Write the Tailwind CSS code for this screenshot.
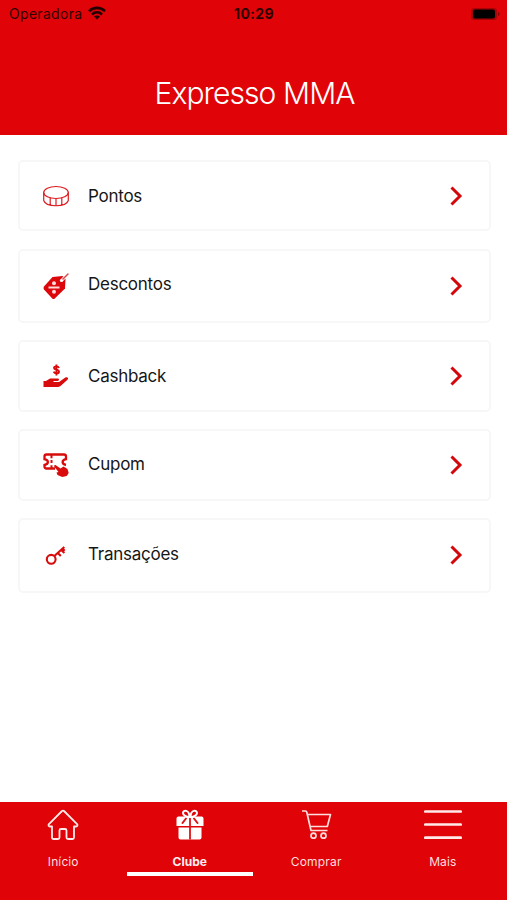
<!DOCTYPE html>
<html lang="pt-BR">
<head>
<meta charset="utf-8">
<title>Expresso MMA</title>
<script src="https://cdn.jsdelivr.net/npm/@tailwindcss/browser@4"></script>
</head>
<body class="bg-white">
<div class="flex h-[900px] w-[507px] flex-col overflow-hidden bg-white font-['Inter','Liberation_Sans',sans-serif] text-[#161616]">
  <header class="h-[135px] shrink-0 bg-[#e00408]">
    <div class="grid h-[27px] grid-cols-3 items-center pl-[9px] pr-[6px] text-[#300000]">
      <div class="flex items-center gap-[6px]">
        <span class="text-[14px] leading-none tracking-[0.3px]">Operadora</span>
        <svg class="-mt-px h-[14px] w-[18px]" viewBox="0 0 18 14" fill="none" stroke="#240000" stroke-width="2.700"><path d="M1 5.2C5.5.8 12.500.8 17 5.200M4 8.500c2.900-2.800 7.100-2.800 10 0"/><path d="M9 13.500 6 10.600c1.700-1.600 4.300-1.600 6 0z" fill="#240000" stroke="none"/></svg>
      </div>
      <span class="pr-[2px] text-center text-[14px] font-bold leading-none tracking-[0.4px]">10:29</span>
      <svg class="justify-self-end" width="31" height="14" viewBox="0 0 31 14"><rect x="1" y="1" width="26" height="12" rx="3.500" fill="#a80306"/><rect x="3" y="2.500" width="22" height="9" rx="2" fill="#000"/><path d="M28 5c2 .5 2 3.500 0 4z" fill="#8c0204"/></svg>
    </div>
    <h1 class="pl-[2px] pt-[47px] text-center text-[30px] font-light leading-[38px] tracking-[-0.9px] text-white">Expresso MMA</h1>
  </header>

  <main class="flex flex-1 flex-col pl-[18px] pr-4 pt-[25px] text-[17px] tracking-[-0.25px]">
    <a class="mb-[18px] flex h-[71px] items-center rounded-[5px] border-2 border-[#f7f7f7] pl-[22px] pr-[25px]">
      <svg class="mr-[18px] size-7" viewBox="0 0 28 28" fill="none" stroke="#dc1c20" stroke-width="1.200"><ellipse cx="14" cy="10.500" rx="12.300" ry="6"/><path d="M1.700 10.500v8C4 25.500 24 25.500 26.300 18.500V10.500M8.200 15.800v7M14 16.800v7M19.800 15.800v7"/></svg>
      <span class="mt-[2px] flex-1">Pontos</span>
      <svg width="16" height="22" viewBox="0 0 16 22" fill="none" stroke="#d3080c" stroke-width="3"><path d="m3.500 2.500 8.500 8.500-8.500 8.500"/></svg>
    </a>
    <a class="mb-[17px] flex h-[74px] items-center rounded-[5px] border-2 border-[#f7f7f7] pl-[22px] pr-[25px]">
      <svg class="mr-[18px] size-7" viewBox="0 0 28 28"><path d="m2 14.500 8.500-9.500L20.500 4l3 3-.5 9.500L12.500 26.700q-1 .8-2 0L2 17.500q-1-1.500 0-3z" fill="#db070b"/><path d="m19.500 8.500 6.500-6.500" stroke="#fff" stroke-width="3"/><path d="M20 8 26 2" stroke="#d94a4c" stroke-width="1.500" stroke-linecap="round"/><circle cx="19.500" cy="8.500" r="1.600" fill="#fff"/><path d="M6.500 15.500h11" stroke="#ffd9d9" stroke-width="2"/><circle cx="12" cy="11.200" r="2" fill="#ffd9d9"/><circle cx="12" cy="19.800" r="2" fill="#ffd9d9"/></svg>
      <span class="-mt-[3px] flex-1">Descontos</span>
      <svg width="16" height="22" viewBox="0 0 16 22" fill="none" stroke="#d3080c" stroke-width="3"><path d="m3.500 2.500 8.500 8.500-8.500 8.500"/></svg>
    </a>
    <a class="mb-[17px] flex h-[72px] items-center rounded-[5px] border-2 border-[#f7f7f7] pl-[22px] pr-[25px]">
      <svg class="mr-[18px] size-7" viewBox="0 0 28 28" fill="#d80c0c"><path d="M1.500 19h2.500l4-2.500h7.500c2 0 2 2.300 0 2.500h-4v1h5.500l6-4.300c2-1.200 4.200.2 2.500 2l-7 6.300-2 .9H1.500z"/><path d="M17 6C16.200 3.900 12 3.800 12 6c0 2.200 5 1.300 5 3.700 0 2.100-4.500 2.200-5.300-.1M14.400 2.500v11" fill="none" stroke="#d80c0c" stroke-width="1.900"/></svg>
      <span class="mt-px flex-1">Cashback</span>
      <svg width="16" height="22" viewBox="0 0 16 22" fill="none" stroke="#d3080c" stroke-width="3"><path d="m3.500 2.500 8.500 8.500-8.500 8.500"/></svg>
    </a>
    <a class="mb-[17px] flex h-[72px] items-center rounded-[5px] border-2 border-[#f7f7f7] pl-[22px] pr-[25px]">
      <svg class="mr-[18px] size-7" viewBox="0 0 28 28"><path d="M13 17.500H4.500q-2 0-2-2v-1.500c4.500-.8 4.500-5 0-5.800V5.500q0-2 2-2h17.500q2 0 2 2v2.700c-4.500.8-4.500 5 0 5.800" fill="none" stroke="#d80c0c" stroke-width="2.300"/><path d="M9.500 4v3.200m0 1.800v3m0 2.300v3" stroke="#d80c0c" stroke-width="2"/><path d="m13.500 14 5 3.500 3-2 4 2.500 1.200 4-2 3-4.500 1-4.700-2-1-2.500 2-.5-4-5c-.8-1.200-.2-2.200 1-2z" fill="#d80c0c"/></svg>
      <span class="-mt-px flex-1">Cupom</span>
      <svg width="16" height="22" viewBox="0 0 16 22" fill="none" stroke="#d3080c" stroke-width="3"><path d="m3.500 2.500 8.500 8.500-8.500 8.500"/></svg>
    </a>
    <a class="flex h-[75px] items-center rounded-[5px] border-2 border-[#f7f7f7] pl-[22px] pr-[25px]">
      <svg class="mr-[18px] size-7" viewBox="0 0 28 28" fill="none" stroke="#d80c0c" stroke-width="2.100"><circle cx="9.200" cy="17.300" r="4.400"/><path d="M12.400 14 22.300 5M15.800 11l3 3M19.200 8l3.200 3M20.500 6.500l2.200 2.200"/></svg>
      <span class="-mt-[2px] flex-1">Transações</span>
      <svg class="-mt-px" width="16" height="22" viewBox="0 0 16 22" fill="none" stroke="#d3080c" stroke-width="3"><path d="m3.500 2.500 8.500 8.500-8.500 8.500"/></svg>
    </a>
  </main>

  <nav class="grid h-[98px] shrink-0 grid-cols-4 bg-[#e00408] pr-[1px] text-[12px] text-[#ffdede]">
    <a class="flex h-[74px] flex-col items-center pt-[6px]">
      <svg class="size-[34px]" viewBox="0 0 34 34" fill="none" stroke="#ffe9e9" stroke-width="1.800" stroke-linejoin="round"><path d="M16 3q1-.8 2 0l13.300 13.300q.7 2-1.300 2.200h-2V29.500q0 1.500-1.500 1.500H22q-1.500 0-1.500-1.500v-7q0-1.500-1.500-1.500h-4q-1.500 0-1.500 1.500v7q0 1.500-1.500 1.500H7.500Q6 31 6 29.500V18.500H4q-2-.2-1.300-2.200z"/></svg>
      <span class="mt-[12px] leading-4 tracking-[0.1px]">Início</span>
    </a>
    <a class="flex h-[74px] flex-col items-center border-b-4 border-white pt-[6px]">
      <svg class="size-[34px]" viewBox="0 0 34 34"><path d="M5.500 8.500h23q2 0 2 2V18h-27v-7.500q0-2 2-2zM5.500 19.500h23V29.500q0 2-2 2h-19q-2 0-2-2z" fill="#fff"/><path d="M17 8.500v23" stroke="#df1216" stroke-width="1.800"/><path d="m13 10.500-3.500 4.500M21 10.500l3.500 4.500" stroke="#df1216" stroke-width="2" stroke-linecap="round"/><path d="M16.500 9C13.500 9 10 7.500 10 5c0-3.500 6.500-3.500 6.500 4zM17.500 9C20.500 9 24 7.500 24 5c0-3.500-6.500-3.500-6.500 4z" fill="#e00408" stroke="#fff" stroke-width="2"/></svg>
      <span class="mt-[12px] font-bold leading-4 text-[#ffeeee]">Clube</span>
    </a>
    <a class="flex h-[74px] flex-col items-center pt-[6px]">
      <svg class="size-[34px]" viewBox="0 0 34 34" fill="none" stroke="#ffdede" stroke-width="1.700" stroke-linejoin="round"><path d="M3 3h3.500q1 0 1.300 1.300L12 22.500h16.500M8.300 6.500H31.500L28.300 18.500H11"/><circle cx="14.500" cy="27.700" r="2.500"/><circle cx="24.500" cy="27.700" r="2.500"/></svg>
      <span class="mt-[12px] leading-4 tracking-[0.2px]">Comprar</span>
    </a>
    <a class="flex h-[74px] flex-col items-center pt-[6px]">
      <svg width="38" height="34" viewBox="0 0 38 34" stroke="#ffe9e9" stroke-width="2.700" stroke-linecap="round"><path d="M1.300 3.500h35.400M1.300 16.500h35.400M1.300 29.700h35.400"/></svg>
      <span class="mt-[12px] leading-4 tracking-[0.1px]">Mais</span>
    </a>
  </nav>
</div>
</body>
</html>
